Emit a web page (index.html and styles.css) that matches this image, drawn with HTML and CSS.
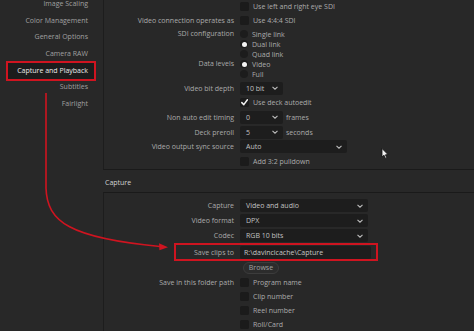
FILE: index.html
```html
<!DOCTYPE html>
<html>
<head>
<meta charset="utf-8">
<link rel="stylesheet" href="styles.css">
</head>
<body>
<div class="app">
  <nav class="sidebar">
    <div class="nav-item">Image Scaling</div>
    <div class="nav-item">Color Management</div>
    <div class="nav-item">General Options</div>
    <div class="nav-item">Camera RAW</div>
    <div class="nav-item active">Capture and Playback</div>
    <div class="nav-item">Subtitles</div>
    <div class="nav-item">Fairlight</div>
  </nav>

  <main class="main">
    <section class="panel panel-top">
      <div class="row r13"><div class="lbl"></div><div class="ctl"><span class="cb"></span><span class="opt">Use left and right eye SDI</span></div></div>
      <div class="row r14"><div class="lbl">Video connection operates as</div><div class="ctl"><span class="cb"></span><span class="opt">Use 4:4:4 SDI</span></div></div>
      <div class="group g-sdi">
        <div class="lbl">SDI configuration</div>
        <div class="radios">
          <div class="radio-row"><span class="rd"></span><span class="opt">Single link</span></div>
          <div class="radio-row"><span class="rd on"></span><span class="opt">Dual link</span></div>
          <div class="radio-row"><span class="rd"></span><span class="opt">Quad link</span></div>
        </div>
      </div>
      <div class="group">
        <div class="lbl">Data levels</div>
        <div class="radios">
          <div class="radio-row"><span class="rd on"></span><span class="opt">Video</span></div>
          <div class="radio-row"><span class="rd"></span><span class="opt">Full</span></div>
        </div>
      </div>
      <div class="row rr first"><div class="lbl">Video bit depth</div><div class="ctl"><div class="dd w43"><span>10 bit</span><svg class="chev" viewBox="0 0 6 4"><path d="M0.5 0.8 L3 3.2 L5.5 0.8"/></svg></div></div></div>
      <div class="row rr"><div class="lbl"></div><div class="ctl"><span class="cb checked"><svg viewBox="0 0 9 9"><path d="M1.8 4.6 L3.8 6.6 L7.4 1.8"/></svg></span><span class="opt">Use deck autoedit</span></div></div>
      <div class="row rr"><div class="lbl">Non auto edit timing</div><div class="ctl"><div class="dd w43"><span>0</span><svg class="chev" viewBox="0 0 6 4"><path d="M0.5 0.8 L3 3.2 L5.5 0.8"/></svg></div><span class="unit">frames</span></div></div>
      <div class="row rr"><div class="lbl">Deck preroll</div><div class="ctl"><div class="dd w43"><span>5</span><svg class="chev" viewBox="0 0 6 4"><path d="M0.5 0.8 L3 3.2 L5.5 0.8"/></svg></div><span class="unit">seconds</span></div></div>
      <div class="row rr"><div class="lbl">Video output sync source</div><div class="ctl"><div class="dd w107"><span>Auto</span><svg class="chev" viewBox="0 0 6 4"><path d="M0.5 0.8 L3 3.2 L5.5 0.8"/></svg></div></div></div>
      <div class="row rr"><div class="lbl"></div><div class="ctl"><span class="cb"></span><span class="opt">Add 3:2 pulldown</span></div></div>
    </section>

    <h3 class="section-title">Capture</h3>

    <section class="panel panel-bottom">
      <div class="row rb"><div class="lbl">Capture</div><div class="ctl"><div class="dd w128"><span>Video and audio</span><svg class="chev" viewBox="0 0 6 4"><path d="M0.5 0.8 L3 3.2 L5.5 0.8"/></svg></div></div></div>
      <div class="row rb"><div class="lbl">Video format</div><div class="ctl"><div class="dd w128"><span>DPX</span><svg class="chev" viewBox="0 0 6 4"><path d="M0.5 0.8 L3 3.2 L5.5 0.8"/></svg></div></div></div>
      <div class="row rb"><div class="lbl">Codec</div><div class="ctl"><div class="dd w128"><span>RGB 10 bits</span><svg class="chev" viewBox="0 0 6 4"><path d="M0.5 0.8 L3 3.2 L5.5 0.8"/></svg></div></div></div>
      <div class="row rsave"><div class="lbl">Save clips to</div><div class="ctl"><div class="input">R:\davincicache\Capture</div></div><div class="mark-box"></div></div>
      <div class="row rbrowse"><div class="lbl"></div><div class="ctl"><button class="btn">Browse</button></div></div>
      <div class="row rc"><div class="lbl">Save in this folder path</div><div class="ctl"><span class="cb"></span><span class="opt">Program name</span></div></div>
      <div class="row rc"><div class="lbl"></div><div class="ctl"><span class="cb"></span><span class="opt">Clip number</span></div></div>
      <div class="row rc"><div class="lbl"></div><div class="ctl"><span class="cb"></span><span class="opt">Reel number</span></div></div>
      <div class="row rc"><div class="lbl"></div><div class="ctl"><span class="cb"></span><span class="opt">Roll/Card</span></div></div>
    </section>
  </main>

  <svg class="arrow" viewBox="0 0 474 331" width="474" height="331">
    <path class="arrow-line" d="M46 93 L46 188 C47 222 70 238 160 246.5"/>
    <path class="arrow-head" d="M168 247.3 L159 243.2 L159.4 250.2 Z"/>
  </svg>

  <svg class="cursor" viewBox="0 0 8 12" width="8" height="12">
    <path d="M1 0.5 L1 9 L3 7.2 L4.6 10.6 L5.9 10 L4.4 6.8 L7 6.6 Z" fill="#f2f2f2" stroke="#111" stroke-width="0.8"/>
  </svg>
</div>
</body>
</html>
```

FILE: styles.css
```css
* { box-sizing: border-box; }

html, body {
  margin: 0;
  padding: 0;
  background: #282828;
}

body {
  font-family: "Open Sans", "Liberation Sans", sans-serif;
  font-size: 7px;
  color: #a9a9a9;
  width: 474px;
  height: 331px;
  overflow: hidden;
}

.app {
  position: relative;
  display: flex;
  width: 474px;
  height: 331px;
}

/* Sidebar */
.sidebar {
  width: 103px;
  flex: none;
  display: flex;
  flex-direction: column;
  align-items: stretch;
  margin-top: -4px;
}

.nav-item {
  height: 16.7px;
  line-height: 16.7px;
  text-align: right;
  padding-right: 15px;
  color: #a0a0a0;
  white-space: nowrap;
}

.nav-item.active {
  color: #ececec;
  background: #1c1c1c;
  margin: 0 9px 0 8px;
  padding-right: 6px;
  outline: 2px solid #cf1420;
  outline-offset: 0px;
}

/* Main area */
.main {
  flex: 1;
  display: flex;
  flex-direction: column;
}

.panel {
  border-left: 1px solid #1d1d1d;
  display: flex;
  flex-direction: column;
}

.panel-top {
  height: 173px;
  border-bottom: 1px solid #1a1a1a;
}

.panel-bottom {
  border-top: 1px solid #1a1a1a;
  flex: 1;
  padding-top: 5px;
}

.section-title {
  margin: 0;
  height: 23px;
  padding-top: 6px;
  line-height: 14px;
  padding-left: 2px;
  font-size: 7px;
  font-weight: normal;
  color: #d4d4d4;
}

.row {
  display: flex;
  align-items: center;
}

.lbl {
  width: 130px;
  flex: none;
  text-align: right;
  white-space: nowrap;
  color: #ababab;
}

.ctl {
  margin-left: 6px;
  display: flex;
  align-items: center;
  white-space: nowrap;
}

.r13 { height: 13px; }
.r14 { height: 14px; margin-bottom: 2px; }
.rr { height: 14.6px; }
.rr.first { margin-top: 2px; }

.group {
  display: flex;
  align-items: flex-start;
}

.group .lbl {
  height: 10px;
  line-height: 10px;
}

.radios {
  margin-left: 6px;
  display: flex;
  flex-direction: column;
}

.radio-row {
  height: 10px;
  display: flex;
  align-items: center;
}

.opt {
  margin-left: 4px;
  color: #acacac;
}

.unit {
  margin-left: 3px;
  color: #acacac;
}

/* checkbox */
.cb {
  width: 9px;
  height: 9px;
  background: #1b1b1b;
  border-radius: 1.5px;
  flex: none;
  display: flex;
  align-items: center;
  justify-content: center;
}

.cb svg {
  width: 9px;
  height: 9px;
  fill: none;
  stroke: #f2f2f2;
  stroke-width: 1.5;
  stroke-linecap: round;
  stroke-linejoin: round;
}

/* radio */
.rd {
  width: 8px;
  height: 8px;
  border-radius: 50%;
  background: #1c1c1c;
  flex: none;
  display: flex;
  align-items: center;
  justify-content: center;
}

.rd.on::after {
  content: "";
  width: 5px;
  height: 5px;
  border-radius: 50%;
  background: #f4f4f4;
}

/* dropdown */
.dd {
  height: 13px;
  background: #1d1d1d;
  border-radius: 2px;
  display: flex;
  align-items: center;
  justify-content: space-between;
  padding: 0 5px 0 6px;
  color: #c2c2c2;
}

.w43 { width: 43px; }
.w107 { width: 107px; }
.w128 { width: 128px; }

.chev {
  width: 6px;
  height: 4px;
  fill: none;
  stroke: #bdbdbd;
  stroke-width: 1.1;
}

/* bottom rows */
.rb { height: 15px; }

.rsave {
  height: 16px;
  position: relative;
  margin-top: 1px;
}

.input {
  width: 131px;
  height: 13px;
  line-height: 13px;
  background: #1d1d1d;
  border-radius: 2px;
  padding-left: 4px;
  color: #c6c6c6;
}

.mark-box {
  position: absolute;
  left: 70px;
  top: -1px;
  width: 204px;
  height: 18px;
  border: 2px solid #cf1420;
}

.rbrowse { height: 15px; }

.btn {
  margin-left: 3px;
  height: 12px;
  width: 36px;
  padding: 0;
  border: 1px solid #3c3c3c;
  border-radius: 6px;
  background: #2c2c2c;
  color: #a2a2a2;
  font-family: inherit;
  font-size: 7px;
  line-height: 10px;
}

.rc { height: 14px; }

/* annotations */
.arrow {
  position: absolute;
  left: 0;
  top: 0;
  pointer-events: none;
}

.arrow-line {
  fill: none;
  stroke: #cf1420;
  stroke-width: 1.6;
}

.arrow-head {
  fill: #cf1420;
}

.cursor {
  position: absolute;
  left: 381px;
  top: 148px;
}
```
